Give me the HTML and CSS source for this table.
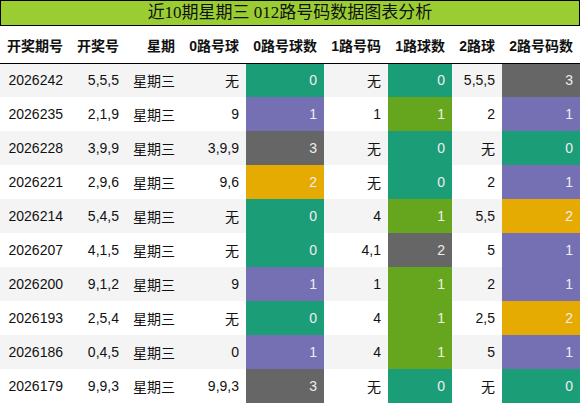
FILE: index.html
```html
<!DOCTYPE html>
<html lang="zh">
<head>
    <meta charset="UTF-8">
    <meta name="viewport" content="width=device-width, initial-scale=1.0">
    <title>近10期星期三 012路号码数据图表分析</title>
    <link rel="stylesheet" href="styles.css">
</head>
<body>
    <div class="chart">
        <!-- 标题 -->
        <div class="title">近10期星期三 012路号码数据图表分析</div>
        <table class="data">
            <colgroup>
                <col class="w70"><col class="w56"><col class="w56"><col class="w64"><col class="w78">
                <col class="w64"><col class="w64"><col class="w50"><col class="w78">
            </colgroup>
            <thead>
                <tr>
                    <th>开奖期号</th><th>开奖号</th><th>星期</th><th>0路号球</th><th>0路号球数</th>
                    <th>1路号码</th><th>1路球数</th><th>2路球</th><th>2路号码数</th>
                </tr>
            </thead>
            <tbody>
                <tr>
                    <td>2026242</td><td>5,5,5</td><td>星期三</td><td>无</td><td class="c0">0</td>
                    <td>无</td><td class="c0">0</td><td>5,5,5</td><td class="c3">3</td>
                </tr>
                <tr>
                    <td>2026235</td><td>2,1,9</td><td>星期三</td><td>9</td><td class="c1">1</td>
                    <td>1</td><td class="g1">1</td><td>2</td><td class="c1">1</td>
                </tr>
                <tr>
                    <td>2026228</td><td>3,9,9</td><td>星期三</td><td>3,9,9</td><td class="c3">3</td>
                    <td>无</td><td class="c0">0</td><td>无</td><td class="c0">0</td>
                </tr>
                <tr>
                    <td>2026221</td><td>2,9,6</td><td>星期三</td><td>9,6</td><td class="c2">2</td>
                    <td>无</td><td class="c0">0</td><td>2</td><td class="c1">1</td>
                </tr>
                <tr>
                    <td>2026214</td><td>5,4,5</td><td>星期三</td><td>无</td><td class="c0">0</td>
                    <td>4</td><td class="g1">1</td><td>5,5</td><td class="c2">2</td>
                </tr>
                <tr>
                    <td>2026207</td><td>4,1,5</td><td>星期三</td><td>无</td><td class="c0">0</td>
                    <td>4,1</td><td class="c3">2</td><td>5</td><td class="c1">1</td>
                </tr>
                <tr>
                    <td>2026200</td><td>9,1,2</td><td>星期三</td><td>9</td><td class="c1">1</td>
                    <td>1</td><td class="g1">1</td><td>2</td><td class="c1">1</td>
                </tr>
                <tr>
                    <td>2026193</td><td>2,5,4</td><td>星期三</td><td>无</td><td class="c0">0</td>
                    <td>4</td><td class="g1">1</td><td>2,5</td><td class="c2">2</td>
                </tr>
                <tr>
                    <td>2026186</td><td>0,4,5</td><td>星期三</td><td>0</td><td class="c1">1</td>
                    <td>4</td><td class="g1">1</td><td>5</td><td class="c1">1</td>
                </tr>
                <tr>
                    <td>2026179</td><td>9,9,3</td><td>星期三</td><td>9,9,3</td><td class="c3">3</td>
                    <td>无</td><td class="c0">0</td><td>无</td><td class="c0">0</td>
                </tr>
            </tbody>
        </table>
    </div>
</body>
</html>
```

FILE: styles.css
```css
* {
    margin: 0;
    padding: 0;
    box-sizing: border-box;
}
body {
    background-color: #fff;
    font-family: "Liberation Sans", "Noto Sans CJK SC", sans-serif;
    color: #111;
}
.chart {
    width: 580px;
}
/* 标题栏 */
.title {
    height: 26px;
    width: 580px;
    border: 1px solid #000;
    background-color: #9acd32;
    font-family: "Liberation Serif", "Noto Sans CJK SC", serif;
    font-size: 17px;
    line-height: 24px;
    text-align: center;
    color: #111;
}
.data {
    width: 580px;
    border-collapse: collapse;
    table-layout: fixed;
}
.w50 { width: 50px; }
.w56 { width: 56px; }
.w64 { width: 64px; }
.w70 { width: 70px; }
.w78 { width: 78px; }
.data th,
.data td {
    padding: 0 7px;
    text-align: right;
    font-size: 14px;
    white-space: nowrap;
}
.data th {
    height: 37px;
    font-weight: bold;
    border-bottom: 1px solid #000;
    padding-top: 1px;
}
.data td {
    height: 34px;
}
.data tbody tr:nth-child(odd) {
    background-color: #f4f4f4;
}
/* 彩色单元格 */
.data td.c0,
.data td.c1,
.data td.c2,
.data td.c3,
.data td.g1 {
    color: #eee;
}
.data td.c0 { background-color: #1b9e77; }
.data td.c1 { background-color: #7570b3; }
.data td.c2 { background-color: #e6ab02; }
.data td.c3 { background-color: #666666; }
.data td.g1 { background-color: #66a61e; }
```
